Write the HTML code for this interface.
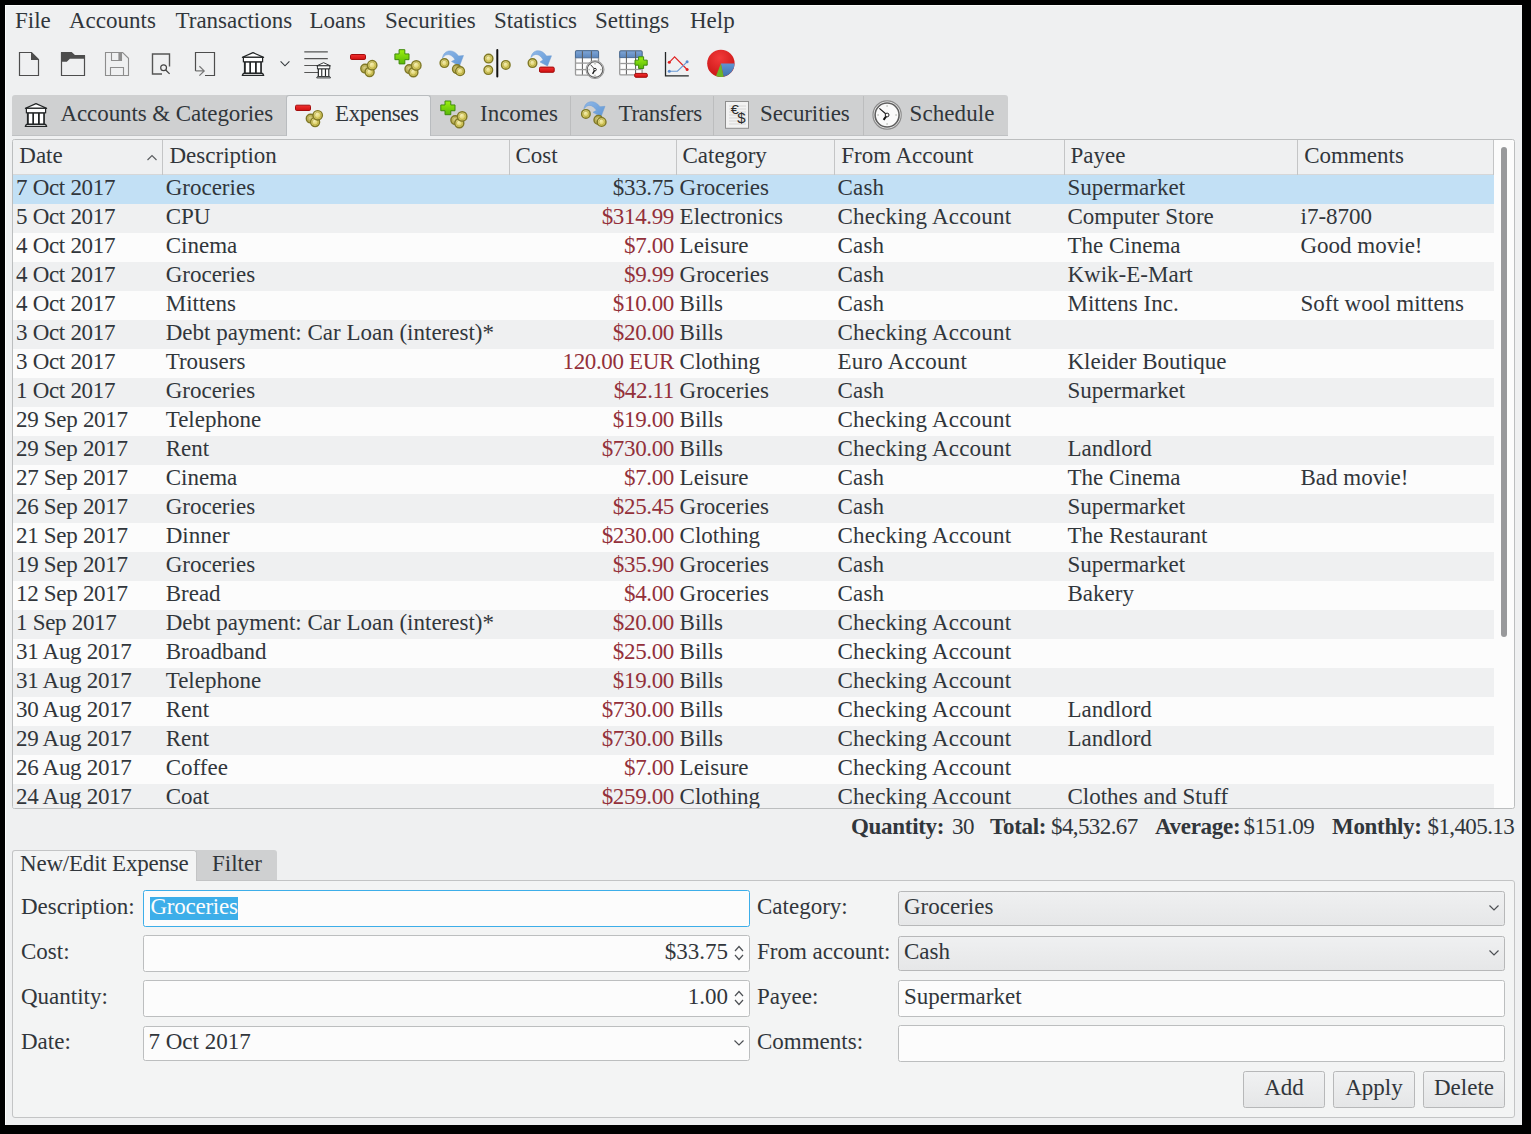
<!DOCTYPE html><html><head><meta charset="utf-8"><style>
*{margin:0;padding:0;box-sizing:border-box}
html,body{width:1531px;height:1134px;overflow:hidden;background:#000}
body{position:relative;font-family:'Liberation Serif',serif;font-size:23px;color:#31363b}
.t{position:absolute;white-space:pre;line-height:29px;height:29px}
.a{position:absolute}
svg{position:absolute;overflow:visible}
</style></head><body>
<div class="a" style="left:5px;top:5px;width:1517px;height:1120px;background:#eff0f1;border-left:1px solid #fcfcfc;border-top:1px solid #fcfcfc"></div>

<div class="t" style="left:15px;top:6px;">File</div>
<div class="t" style="left:69px;top:6px;">Accounts</div>
<div class="t" style="left:175.5px;top:6px;">Transactions</div>
<div class="t" style="left:309.5px;top:6px;">Loans</div>
<div class="t" style="left:385px;top:6px;">Securities</div>
<div class="t" style="left:494px;top:6px;">Statistics</div>
<div class="t" style="left:595px;top:6px;">Settings</div>
<div class="t" style="left:690px;top:6px;">Help</div>
<div class="a" style="left:12px;top:95px;width:996px;height:41px;background:#cfd0d1;border-bottom:1px solid #bfc1c3;border-radius:3px 3px 0 0"></div>
<div class="a" style="left:570px;top:96px;width:1px;height:40px;background:#bcbdbe"></div>
<div class="a" style="left:713px;top:96px;width:1px;height:40px;background:#bcbdbe"></div>
<div class="a" style="left:863px;top:96px;width:1px;height:40px;background:#bcbdbe"></div>
<div class="a" style="left:286px;top:95px;width:145px;height:41px;background:#eff0f1;border:1px solid #b9bcbf;border-bottom:none;border-radius:3px 3px 0 0;z-index:2"></div>
<div class="t" style="left:60.5px;top:99px;z-index:3;letter-spacing:-0.1px">Accounts &amp; Categories</div>
<div class="t" style="left:335px;top:99px;z-index:3;letter-spacing:-0.4px">Expenses</div>
<div class="t" style="left:480px;top:99px;z-index:3;letter-spacing:0px">Incomes</div>
<div class="t" style="left:618.5px;top:99px;z-index:3;letter-spacing:-0.3px">Transfers</div>
<div class="t" style="left:760px;top:99px;z-index:3;letter-spacing:-0.1px">Securities</div>
<div class="t" style="left:909.5px;top:99px;z-index:3;letter-spacing:0.1px">Schedule</div>
<div class="a" style="left:12px;top:139px;width:1503px;height:670px;background:#fcfcfc;border:1px solid #bcbebf;border-radius:2.5px;overflow:hidden;z-index:1">
<div class="a" style="left:0;top:0;width:1481px;height:35px;background:#eff0f1;border-bottom:1px solid #d6d7d8"></div>
<div class="a" style="left:149px;top:0;width:1px;height:35px;background:#c4c5c6"></div>
<div class="a" style="left:496px;top:0;width:1px;height:35px;background:#c4c5c6"></div>
<div class="a" style="left:663px;top:0;width:1px;height:35px;background:#c4c5c6"></div>
<div class="a" style="left:821px;top:0;width:1px;height:35px;background:#c4c5c6"></div>
<div class="a" style="left:1051px;top:0;width:1px;height:35px;background:#c4c5c6"></div>
<div class="a" style="left:1284px;top:0;width:1px;height:35px;background:#c4c5c6"></div>
<div class="a" style="left:1480px;top:0;width:1px;height:35px;background:#c4c5c6"></div>
<div class="t" style="left:6.300000000000001px;top:1px;">Date</div>
<div class="t" style="left:156.5px;top:1px;">Description</div>
<div class="t" style="left:502.5px;top:1px;">Cost</div>
<div class="t" style="left:669.5px;top:1px;">Category</div>
<div class="t" style="left:828.2px;top:1px;">From Account</div>
<div class="t" style="left:1057.5px;top:1px;">Payee</div>
<div class="t" style="left:1291.2px;top:1px;">Comments</div>
<svg style="left:134px;top:14px" width="11" height="7"><path d="M0.5 6 L5 1.5 L9.5 6" fill="none" stroke="#5b5e61" stroke-width="1.2"/></svg>
<div class="a" style="left:0;top:35px;width:1481px;height:29px;background:#c2e0f5"></div>
<div class="t" style="left:3px;top:33px;letter-spacing:-0.3px">7 Oct 2017</div>
<div class="t" style="left:152.7px;top:33px;">Groceries</div>
<div class="t" style="right:840px;top:33px;color:#31363b;letter-spacing:-0.35px">$33.75</div>
<div class="t" style="left:666.6px;top:33px;">Groceries</div>
<div class="t" style="left:824.5px;top:33px;letter-spacing:0.2px">Cash</div>
<div class="t" style="left:1054.5px;top:33px;">Supermarket</div>
<div class="t" style="left:1287.5px;top:33px;"></div>
<div class="a" style="left:0;top:64px;width:1481px;height:29px;background:#eff0f1"></div>
<div class="t" style="left:3px;top:62px;letter-spacing:-0.3px">5 Oct 2017</div>
<div class="t" style="left:152.7px;top:62px;">CPU</div>
<div class="t" style="right:840px;top:62px;color:#93303a;letter-spacing:-0.35px">$314.99</div>
<div class="t" style="left:666.6px;top:62px;">Electronics</div>
<div class="t" style="left:824.5px;top:62px;letter-spacing:0.2px">Checking Account</div>
<div class="t" style="left:1054.5px;top:62px;">Computer Store</div>
<div class="t" style="left:1287.5px;top:62px;">i7-8700</div>
<div class="a" style="left:0;top:93px;width:1481px;height:29px;background:#fcfcfc"></div>
<div class="t" style="left:3px;top:91px;letter-spacing:-0.3px">4 Oct 2017</div>
<div class="t" style="left:152.7px;top:91px;">Cinema</div>
<div class="t" style="right:840px;top:91px;color:#93303a;letter-spacing:-0.35px">$7.00</div>
<div class="t" style="left:666.6px;top:91px;">Leisure</div>
<div class="t" style="left:824.5px;top:91px;letter-spacing:0.2px">Cash</div>
<div class="t" style="left:1054.5px;top:91px;">The Cinema</div>
<div class="t" style="left:1287.5px;top:91px;">Good movie!</div>
<div class="a" style="left:0;top:122px;width:1481px;height:29px;background:#eff0f1"></div>
<div class="t" style="left:3px;top:120px;letter-spacing:-0.3px">4 Oct 2017</div>
<div class="t" style="left:152.7px;top:120px;">Groceries</div>
<div class="t" style="right:840px;top:120px;color:#93303a;letter-spacing:-0.35px">$9.99</div>
<div class="t" style="left:666.6px;top:120px;">Groceries</div>
<div class="t" style="left:824.5px;top:120px;letter-spacing:0.2px">Cash</div>
<div class="t" style="left:1054.5px;top:120px;">Kwik-E-Mart</div>
<div class="t" style="left:1287.5px;top:120px;"></div>
<div class="a" style="left:0;top:151px;width:1481px;height:29px;background:#fcfcfc"></div>
<div class="t" style="left:3px;top:149px;letter-spacing:-0.3px">4 Oct 2017</div>
<div class="t" style="left:152.7px;top:149px;">Mittens</div>
<div class="t" style="right:840px;top:149px;color:#93303a;letter-spacing:-0.35px">$10.00</div>
<div class="t" style="left:666.6px;top:149px;">Bills</div>
<div class="t" style="left:824.5px;top:149px;letter-spacing:0.2px">Cash</div>
<div class="t" style="left:1054.5px;top:149px;">Mittens Inc.</div>
<div class="t" style="left:1287.5px;top:149px;">Soft wool mittens</div>
<div class="a" style="left:0;top:180px;width:1481px;height:29px;background:#eff0f1"></div>
<div class="t" style="left:3px;top:178px;letter-spacing:-0.3px">3 Oct 2017</div>
<div class="t" style="left:152.7px;top:178px;">Debt payment: Car Loan (interest)*</div>
<div class="t" style="right:840px;top:178px;color:#93303a;letter-spacing:-0.35px">$20.00</div>
<div class="t" style="left:666.6px;top:178px;">Bills</div>
<div class="t" style="left:824.5px;top:178px;letter-spacing:0.2px">Checking Account</div>
<div class="t" style="left:1054.5px;top:178px;"></div>
<div class="t" style="left:1287.5px;top:178px;"></div>
<div class="a" style="left:0;top:209px;width:1481px;height:29px;background:#fcfcfc"></div>
<div class="t" style="left:3px;top:207px;letter-spacing:-0.3px">3 Oct 2017</div>
<div class="t" style="left:152.7px;top:207px;">Trousers</div>
<div class="t" style="right:840px;top:207px;color:#93303a;letter-spacing:-0.35px">120.00 EUR</div>
<div class="t" style="left:666.6px;top:207px;">Clothing</div>
<div class="t" style="left:824.5px;top:207px;letter-spacing:0.2px">Euro Account</div>
<div class="t" style="left:1054.5px;top:207px;">Kleider Boutique</div>
<div class="t" style="left:1287.5px;top:207px;"></div>
<div class="a" style="left:0;top:238px;width:1481px;height:29px;background:#eff0f1"></div>
<div class="t" style="left:3px;top:236px;letter-spacing:-0.3px">1 Oct 2017</div>
<div class="t" style="left:152.7px;top:236px;">Groceries</div>
<div class="t" style="right:840px;top:236px;color:#93303a;letter-spacing:-0.35px">$42.11</div>
<div class="t" style="left:666.6px;top:236px;">Groceries</div>
<div class="t" style="left:824.5px;top:236px;letter-spacing:0.2px">Cash</div>
<div class="t" style="left:1054.5px;top:236px;">Supermarket</div>
<div class="t" style="left:1287.5px;top:236px;"></div>
<div class="a" style="left:0;top:267px;width:1481px;height:29px;background:#fcfcfc"></div>
<div class="t" style="left:3px;top:265px;letter-spacing:-0.3px">29 Sep 2017</div>
<div class="t" style="left:152.7px;top:265px;">Telephone</div>
<div class="t" style="right:840px;top:265px;color:#93303a;letter-spacing:-0.35px">$19.00</div>
<div class="t" style="left:666.6px;top:265px;">Bills</div>
<div class="t" style="left:824.5px;top:265px;letter-spacing:0.2px">Checking Account</div>
<div class="t" style="left:1054.5px;top:265px;"></div>
<div class="t" style="left:1287.5px;top:265px;"></div>
<div class="a" style="left:0;top:296px;width:1481px;height:29px;background:#eff0f1"></div>
<div class="t" style="left:3px;top:294px;letter-spacing:-0.3px">29 Sep 2017</div>
<div class="t" style="left:152.7px;top:294px;">Rent</div>
<div class="t" style="right:840px;top:294px;color:#93303a;letter-spacing:-0.35px">$730.00</div>
<div class="t" style="left:666.6px;top:294px;">Bills</div>
<div class="t" style="left:824.5px;top:294px;letter-spacing:0.2px">Checking Account</div>
<div class="t" style="left:1054.5px;top:294px;">Landlord</div>
<div class="t" style="left:1287.5px;top:294px;"></div>
<div class="a" style="left:0;top:325px;width:1481px;height:29px;background:#fcfcfc"></div>
<div class="t" style="left:3px;top:323px;letter-spacing:-0.3px">27 Sep 2017</div>
<div class="t" style="left:152.7px;top:323px;">Cinema</div>
<div class="t" style="right:840px;top:323px;color:#93303a;letter-spacing:-0.35px">$7.00</div>
<div class="t" style="left:666.6px;top:323px;">Leisure</div>
<div class="t" style="left:824.5px;top:323px;letter-spacing:0.2px">Cash</div>
<div class="t" style="left:1054.5px;top:323px;">The Cinema</div>
<div class="t" style="left:1287.5px;top:323px;">Bad movie!</div>
<div class="a" style="left:0;top:354px;width:1481px;height:29px;background:#eff0f1"></div>
<div class="t" style="left:3px;top:352px;letter-spacing:-0.3px">26 Sep 2017</div>
<div class="t" style="left:152.7px;top:352px;">Groceries</div>
<div class="t" style="right:840px;top:352px;color:#93303a;letter-spacing:-0.35px">$25.45</div>
<div class="t" style="left:666.6px;top:352px;">Groceries</div>
<div class="t" style="left:824.5px;top:352px;letter-spacing:0.2px">Cash</div>
<div class="t" style="left:1054.5px;top:352px;">Supermarket</div>
<div class="t" style="left:1287.5px;top:352px;"></div>
<div class="a" style="left:0;top:383px;width:1481px;height:29px;background:#fcfcfc"></div>
<div class="t" style="left:3px;top:381px;letter-spacing:-0.3px">21 Sep 2017</div>
<div class="t" style="left:152.7px;top:381px;">Dinner</div>
<div class="t" style="right:840px;top:381px;color:#93303a;letter-spacing:-0.35px">$230.00</div>
<div class="t" style="left:666.6px;top:381px;">Clothing</div>
<div class="t" style="left:824.5px;top:381px;letter-spacing:0.2px">Checking Account</div>
<div class="t" style="left:1054.5px;top:381px;">The Restaurant</div>
<div class="t" style="left:1287.5px;top:381px;"></div>
<div class="a" style="left:0;top:412px;width:1481px;height:29px;background:#eff0f1"></div>
<div class="t" style="left:3px;top:410px;letter-spacing:-0.3px">19 Sep 2017</div>
<div class="t" style="left:152.7px;top:410px;">Groceries</div>
<div class="t" style="right:840px;top:410px;color:#93303a;letter-spacing:-0.35px">$35.90</div>
<div class="t" style="left:666.6px;top:410px;">Groceries</div>
<div class="t" style="left:824.5px;top:410px;letter-spacing:0.2px">Cash</div>
<div class="t" style="left:1054.5px;top:410px;">Supermarket</div>
<div class="t" style="left:1287.5px;top:410px;"></div>
<div class="a" style="left:0;top:441px;width:1481px;height:29px;background:#fcfcfc"></div>
<div class="t" style="left:3px;top:439px;letter-spacing:-0.3px">12 Sep 2017</div>
<div class="t" style="left:152.7px;top:439px;">Bread</div>
<div class="t" style="right:840px;top:439px;color:#93303a;letter-spacing:-0.35px">$4.00</div>
<div class="t" style="left:666.6px;top:439px;">Groceries</div>
<div class="t" style="left:824.5px;top:439px;letter-spacing:0.2px">Cash</div>
<div class="t" style="left:1054.5px;top:439px;">Bakery</div>
<div class="t" style="left:1287.5px;top:439px;"></div>
<div class="a" style="left:0;top:470px;width:1481px;height:29px;background:#eff0f1"></div>
<div class="t" style="left:3px;top:468px;letter-spacing:-0.3px">1 Sep 2017</div>
<div class="t" style="left:152.7px;top:468px;">Debt payment: Car Loan (interest)*</div>
<div class="t" style="right:840px;top:468px;color:#93303a;letter-spacing:-0.35px">$20.00</div>
<div class="t" style="left:666.6px;top:468px;">Bills</div>
<div class="t" style="left:824.5px;top:468px;letter-spacing:0.2px">Checking Account</div>
<div class="t" style="left:1054.5px;top:468px;"></div>
<div class="t" style="left:1287.5px;top:468px;"></div>
<div class="a" style="left:0;top:499px;width:1481px;height:29px;background:#fcfcfc"></div>
<div class="t" style="left:3px;top:497px;letter-spacing:-0.3px">31 Aug 2017</div>
<div class="t" style="left:152.7px;top:497px;">Broadband</div>
<div class="t" style="right:840px;top:497px;color:#93303a;letter-spacing:-0.35px">$25.00</div>
<div class="t" style="left:666.6px;top:497px;">Bills</div>
<div class="t" style="left:824.5px;top:497px;letter-spacing:0.2px">Checking Account</div>
<div class="t" style="left:1054.5px;top:497px;"></div>
<div class="t" style="left:1287.5px;top:497px;"></div>
<div class="a" style="left:0;top:528px;width:1481px;height:29px;background:#eff0f1"></div>
<div class="t" style="left:3px;top:526px;letter-spacing:-0.3px">31 Aug 2017</div>
<div class="t" style="left:152.7px;top:526px;">Telephone</div>
<div class="t" style="right:840px;top:526px;color:#93303a;letter-spacing:-0.35px">$19.00</div>
<div class="t" style="left:666.6px;top:526px;">Bills</div>
<div class="t" style="left:824.5px;top:526px;letter-spacing:0.2px">Checking Account</div>
<div class="t" style="left:1054.5px;top:526px;"></div>
<div class="t" style="left:1287.5px;top:526px;"></div>
<div class="a" style="left:0;top:557px;width:1481px;height:29px;background:#fcfcfc"></div>
<div class="t" style="left:3px;top:555px;letter-spacing:-0.3px">30 Aug 2017</div>
<div class="t" style="left:152.7px;top:555px;">Rent</div>
<div class="t" style="right:840px;top:555px;color:#93303a;letter-spacing:-0.35px">$730.00</div>
<div class="t" style="left:666.6px;top:555px;">Bills</div>
<div class="t" style="left:824.5px;top:555px;letter-spacing:0.2px">Checking Account</div>
<div class="t" style="left:1054.5px;top:555px;">Landlord</div>
<div class="t" style="left:1287.5px;top:555px;"></div>
<div class="a" style="left:0;top:586px;width:1481px;height:29px;background:#eff0f1"></div>
<div class="t" style="left:3px;top:584px;letter-spacing:-0.3px">29 Aug 2017</div>
<div class="t" style="left:152.7px;top:584px;">Rent</div>
<div class="t" style="right:840px;top:584px;color:#93303a;letter-spacing:-0.35px">$730.00</div>
<div class="t" style="left:666.6px;top:584px;">Bills</div>
<div class="t" style="left:824.5px;top:584px;letter-spacing:0.2px">Checking Account</div>
<div class="t" style="left:1054.5px;top:584px;">Landlord</div>
<div class="t" style="left:1287.5px;top:584px;"></div>
<div class="a" style="left:0;top:615px;width:1481px;height:29px;background:#fcfcfc"></div>
<div class="t" style="left:3px;top:613px;letter-spacing:-0.3px">26 Aug 2017</div>
<div class="t" style="left:152.7px;top:613px;">Coffee</div>
<div class="t" style="right:840px;top:613px;color:#93303a;letter-spacing:-0.35px">$7.00</div>
<div class="t" style="left:666.6px;top:613px;">Leisure</div>
<div class="t" style="left:824.5px;top:613px;letter-spacing:0.2px">Checking Account</div>
<div class="t" style="left:1054.5px;top:613px;"></div>
<div class="t" style="left:1287.5px;top:613px;"></div>
<div class="a" style="left:0;top:644px;width:1481px;height:29px;background:#eff0f1"></div>
<div class="t" style="left:3px;top:642px;letter-spacing:-0.3px">24 Aug 2017</div>
<div class="t" style="left:152.7px;top:642px;">Coat</div>
<div class="t" style="right:840px;top:642px;color:#93303a;letter-spacing:-0.35px">$259.00</div>
<div class="t" style="left:666.6px;top:642px;">Clothing</div>
<div class="t" style="left:824.5px;top:642px;letter-spacing:0.2px">Checking Account</div>
<div class="t" style="left:1054.5px;top:642px;">Clothes and Stuff</div>
<div class="t" style="left:1287.5px;top:642px;"></div>
<div class="a" style="left:1488px;top:7px;width:6px;height:490px;background:#98999b;border-radius:3px"></div>
</div>
<div class="t" style="left:851px;top:812px;font-weight:bold;letter-spacing:-0.3px">Quantity:</div>
<div class="t" style="left:952px;top:812px;letter-spacing:-0.6px">30</div>
<div class="t" style="left:990px;top:812px;font-weight:bold;letter-spacing:-0.3px">Total:</div>
<div class="t" style="left:1051px;top:812px;letter-spacing:-0.6px">$4,532.67</div>
<div class="t" style="left:1155px;top:812px;font-weight:bold;letter-spacing:-0.3px">Average:</div>
<div class="t" style="left:1243.5px;top:812px;letter-spacing:-0.6px">$151.09</div>
<div class="t" style="left:1332px;top:812px;font-weight:bold;letter-spacing:-0.3px">Monthly:</div>
<div class="t" style="left:1427.5px;top:812px;letter-spacing:-0.6px">$1,405.13</div>
<div class="a" style="left:196px;top:850px;width:81px;height:30px;background:#cfd0d1;border-radius:0 3px 0 0"></div>
<div class="a" style="left:12px;top:880px;width:1503px;height:238px;background:#f3f4f4;border:1px solid #c3c4c5;border-radius:0 3px 3px 3px"></div>
<div class="a" style="left:12px;top:850px;width:185px;height:31px;background:#f3f4f4;border:1px solid #c3c4c5;border-bottom:none;border-radius:3px 3px 0 0;z-index:2"></div>
<div class="t" style="left:20px;top:849px;z-index:3;letter-spacing:-0.2px">New/Edit Expense</div>
<div class="t" style="left:212px;top:849px;z-index:3">Filter</div>
<div class="t" style="left:21px;top:892px;">Description:</div>
<div class="t" style="left:21px;top:937px;">Cost:</div>
<div class="t" style="left:21px;top:982px;">Quantity:</div>
<div class="t" style="left:21px;top:1027px;">Date:</div>
<div class="t" style="left:757px;top:892px;">Category:</div>
<div class="t" style="left:757px;top:937px;">From account:</div>
<div class="t" style="left:757px;top:982px;">Payee:</div>
<div class="t" style="left:757px;top:1027px;">Comments:</div>
<div class="a" style="left:143px;top:890px;width:607px;height:37px;background:#fcfcfc;border:1px solid #3daee9;border-radius:2.5px;"></div>
<div class="a" style="left:150px;top:897px;width:88px;height:23px;background:#3daee9"></div>
<div class="t" style="left:150.5px;top:892px;color:#fcfcfc;letter-spacing:-0.25px">Groceries</div>
<div class="a" style="left:143px;top:935px;width:607px;height:37px;background:#fcfcfc;border:1px solid #bcbebf;border-radius:2.5px;"></div>
<div class="t" style="right:803px;top:937px;">$33.75</div>
<div class="a" style="left:143px;top:980px;width:607px;height:37px;background:#fcfcfc;border:1px solid #bcbebf;border-radius:2.5px;"></div>
<div class="t" style="right:803px;top:982px;">1.00</div>
<div class="a" style="left:143px;top:1026px;width:607px;height:35px;background:#fcfcfc;border:1px solid #bcbebf;border-radius:2.5px;"></div>
<div class="t" style="left:148.5px;top:1027px;">7 Oct 2017</div>
<svg style="left:734px;top:945px" width="10" height="16"><path d="M1 6 L5 1.5 L9 6 M1 10 L5 14.5 L9 10" fill="none" stroke="#4d5054" stroke-width="1.2"/></svg>
<svg style="left:734px;top:990px" width="10" height="16"><path d="M1 6 L5 1.5 L9 6 M1 10 L5 14.5 L9 10" fill="none" stroke="#4d5054" stroke-width="1.2"/></svg>
<svg style="left:734px;top:1040px" width="10" height="6"><path d="M0.5 0.5 L5 5 L9.5 0.5" fill="none" stroke="#4d5054" stroke-width="1.2"/></svg>
<div class="a" style="left:898px;top:891px;width:607px;height:35px;background:linear-gradient(#eff0f1,#e6e7e8);border:1px solid #b7b8b9;border-radius:2.5px;"></div>
<div class="t" style="left:904px;top:892px;">Groceries</div>
<svg style="left:1489px;top:905px" width="10" height="6"><path d="M0.5 0.5 L5 5 L9.5 0.5" fill="none" stroke="#4d5054" stroke-width="1.2"/></svg>
<div class="a" style="left:898px;top:936px;width:607px;height:35px;background:linear-gradient(#eff0f1,#e6e7e8);border:1px solid #b7b8b9;border-radius:2.5px;"></div>
<div class="t" style="left:904px;top:937px;">Cash</div>
<svg style="left:1489px;top:950px" width="10" height="6"><path d="M0.5 0.5 L5 5 L9.5 0.5" fill="none" stroke="#4d5054" stroke-width="1.2"/></svg>
<div class="a" style="left:898px;top:980px;width:607px;height:37px;background:#fcfcfc;border:1px solid #bcbebf;border-radius:2.5px;"></div>
<div class="t" style="left:904px;top:982px;">Supermarket</div>
<div class="a" style="left:898px;top:1025px;width:607px;height:37px;background:#fcfcfc;border:1px solid #bcbebf;border-radius:2.5px;"></div>
<div class="a" style="left:1243px;top:1071px;width:82px;height:37px;background:linear-gradient(#f0f1f2,#e5e6e7);border:1px solid #b7b8b9;border-radius:2.5px;"></div>
<div class="t" style="left:1243px;width:82px;text-align:center;top:1073px">Add</div>
<div class="a" style="left:1333px;top:1071px;width:82px;height:37px;background:linear-gradient(#f0f1f2,#e5e6e7);border:1px solid #b7b8b9;border-radius:2.5px;"></div>
<div class="t" style="left:1333px;width:82px;text-align:center;top:1073px">Apply</div>
<div class="a" style="left:1423px;top:1071px;width:82px;height:37px;background:linear-gradient(#f0f1f2,#e5e6e7);border:1px solid #b7b8b9;border-radius:2.5px;"></div>
<div class="t" style="left:1423px;width:82px;text-align:center;top:1073px">Delete</div>
<svg style="left:0;top:0;z-index:10" width="1531" height="140" viewBox="0 0 1531 140"><defs><radialGradient id="cd" cx="0.4" cy="0.35" r="0.7"><stop offset="0" stop-color="#d8d08a"/><stop offset="1" stop-color="#a89c3c"/></radialGradient><radialGradient id="cg" cx="0.4" cy="0.35" r="0.7"><stop offset="0" stop-color="#f4eeb8"/><stop offset="0.55" stop-color="#e2d670"/><stop offset="1" stop-color="#c8bb48"/></radialGradient><linearGradient id="rg" x1="0" y1="0" x2="0" y2="1"><stop offset="0" stop-color="#f03030"/><stop offset="1" stop-color="#d01010"/></linearGradient><linearGradient id="gg" x1="0" y1="0" x2="0" y2="1"><stop offset="0" stop-color="#9cf010"/><stop offset="1" stop-color="#58b808"/></linearGradient><linearGradient id="bg" x1="0" y1="0" x2="1" y2="1"><stop offset="0" stop-color="#8fb8e8"/><stop offset="1" stop-color="#5f96d4"/></linearGradient><radialGradient id="pr" cx="0.45" cy="0.3" r="0.75"><stop offset="0" stop-color="#f23a3a"/><stop offset="1" stop-color="#c81414"/></radialGradient><linearGradient id="pb" x1="0" y1="0" x2="0" y2="1"><stop offset="0" stop-color="#5f95d2"/><stop offset="1" stop-color="#3f72b0"/></linearGradient><linearGradient id="tg" x1="0" y1="0" x2="0" y2="1"><stop offset="0" stop-color="#7fa6d6"/><stop offset="1" stop-color="#5b86bd"/></linearGradient></defs><path d="M19.5 52.5 H31.5 L38.5 59.5 V75.5 H19.5 Z" fill="none" stroke="#4d4d4d" stroke-width="1.2"/><path d="M31 52 L39 60 H31 Z" fill="#4d4d4d"/><path d="M61.5 52.5 V75.5 H84.5 V55.5" fill="none" stroke="#4d4d4d" stroke-width="1.2"/><path d="M61 52 H71.7 L74.9 55.1 H85 V58.8 H69.9 L66.8 61.7 H61 Z" fill="#4d4d4d"/><path d="M105.5 52.5 H122.7 L128.5 58.3 V75.5 H105.5 Z" fill="none" stroke="#8d8d8d" stroke-width="1.1"/><path d="M111.5 52.5 V60.5 H121.5 V52.5" fill="none" stroke="#8d8d8d" stroke-width="1.1"/><rect x="118.4" y="52.5" width="3.2" height="8" fill="#8d8d8d"/><path d="M110.5 75.5 V67.5 H123.5 V75.5" fill="none" stroke="#8d8d8d" stroke-width="1.1"/><path d="M162 74 H152.5 V54 H169.5 V66.5" fill="none" stroke="#555" stroke-width="1.4"/><circle cx="163.6" cy="67.8" r="2.9" fill="none" stroke="#444" stroke-width="1.2"/><path d="M165.7 70 L169.6 73.9" stroke="#444" stroke-width="1.3"/><path d="M195.5 70.9 V52.5 H214.5 V75.5 H205" fill="none" stroke="#4d4d4d" stroke-width="1.2"/><path d="M195.5 70.9 H204.4 M199.4 66.2 L204.2 70.9 L199.4 75.6" fill="none" stroke="#777" stroke-width="1.2"/><path d="M253.0 52.6 L242.4 57.3 H263.6 Z" fill="#fff" stroke="#232627" stroke-width="1.2" stroke-linejoin="round"/><rect x="243.4" y="57.3" width="19.2" height="4.5" fill="#fff" stroke="#232627" stroke-width="1.2"/><rect x="243.9" y="61.8" width="18.0" height="11.4" fill="#232627"/><rect x="245.8" y="62.7" width="3.5" height="9.9" fill="#fff"/><rect x="251.0" y="62.7" width="4.0" height="9.9" fill="#fff"/><rect x="256.8" y="62.7" width="3.4" height="9.9" fill="#fff"/><path d="M243.4 73.4 H262.6 L263.7 75.4 H242.3 Z" fill="#fff" stroke="#232627" stroke-width="1.2" stroke-linejoin="round"/><path d="M280.6 61.4 L285 65.8 L289.4 61.4" fill="none" stroke="#31363b" stroke-width="1.1"/><path d="M304.3 51.9 H327.8 M304.3 58.6 H327.8 M304.3 65.5 H318 M304.3 72.5 H318" stroke="#555" stroke-width="1.1"/><path d="M323.6 62.7 L316.76 65.83 H330.44 Z" fill="#fff" stroke="#232627" stroke-width="0.9" stroke-linejoin="round"/><rect x="317.4" y="65.83" width="12.39" height="3.0" fill="#fff" stroke="#232627" stroke-width="0.9"/><rect x="317.73" y="68.83" width="11.62" height="7.6" fill="#232627"/><rect x="318.95" y="69.43" width="2.26" height="6.6" fill="#fff"/><rect x="322.31" y="69.43" width="2.58" height="6.6" fill="#fff"/><rect x="326.05" y="69.43" width="2.19" height="6.6" fill="#fff"/><path d="M317.4 76.57 H329.8 L330.51 77.9 H316.69 Z" fill="#fff" stroke="#232627" stroke-width="0.9" stroke-linejoin="round"/><rect x="350.5" y="54.5" width="15" height="5" rx="1.2" fill="url(#rg)" stroke="#a30d0d" stroke-width="1"/><circle cx="365.1" cy="68.6" r="4.3" fill="url(#cd)" stroke="#7f7826" stroke-width="1.4"/><circle cx="365.1" cy="68.6" r="2.6999999999999997" fill="none" stroke="#b3a845" stroke-width="0.7"/><circle cx="369.6" cy="72" r="4.5" fill="url(#cg)" stroke="#7f7826" stroke-width="1.4"/><circle cx="369.6" cy="72" r="2.9" fill="none" stroke="#b3a845" stroke-width="0.7"/><circle cx="372.2" cy="65.2" r="4.7" fill="url(#cg)" stroke="#7f7826" stroke-width="1.4"/><circle cx="372.2" cy="65.2" r="3.1" fill="none" stroke="#b3a845" stroke-width="0.7"/><path d="M399.08 49.7 H404.82 V53.93000000000001 H409.0 V59.67 H404.82 V63.900000000000006 H399.08 V59.67 H394.9 V53.93000000000001 H399.08 Z" fill="url(#gg)" stroke="#3f8a0c" stroke-width="1" stroke-linejoin="miter"/><circle cx="409.3" cy="69.1" r="4.3" fill="url(#cd)" stroke="#7f7826" stroke-width="1.4"/><circle cx="409.3" cy="69.1" r="2.6999999999999997" fill="none" stroke="#b3a845" stroke-width="0.7"/><circle cx="413.4" cy="72.2" r="4.5" fill="url(#cg)" stroke="#7f7826" stroke-width="1.4"/><circle cx="413.4" cy="72.2" r="2.9" fill="none" stroke="#b3a845" stroke-width="0.7"/><circle cx="416.3" cy="65.4" r="4.7" fill="url(#cg)" stroke="#7f7826" stroke-width="1.4"/><circle cx="416.3" cy="65.4" r="3.1" fill="none" stroke="#b3a845" stroke-width="0.7"/><circle cx="444.4" cy="63.1" r="4.3" fill="url(#cg)" stroke="#7f7826" stroke-width="1.4"/><circle cx="444.4" cy="63.1" r="2.6999999999999997" fill="none" stroke="#b3a845" stroke-width="0.7"/><path d="M442.5 58 C443.5 50 453 48 458.5 56 L463.5 55.5 L459.5 66 L451.5 61.5 L455 59.5 C451 53.5 446 53 442.5 58 Z" fill="url(#bg)" stroke="#6d9bd2" stroke-width="0.5" stroke-linejoin="round"/><circle cx="456.9" cy="69.1" r="4.4" fill="url(#cd)" stroke="#7f7826" stroke-width="1.4"/><circle cx="456.9" cy="69.1" r="2.8000000000000003" fill="none" stroke="#b3a845" stroke-width="0.7"/><circle cx="460.1" cy="71.2" r="4.4" fill="url(#cg)" stroke="#7f7826" stroke-width="1.4"/><circle cx="460.1" cy="71.2" r="2.8000000000000003" fill="none" stroke="#b3a845" stroke-width="0.7"/><circle cx="488.6" cy="58.6" r="4.3" fill="url(#cg)" stroke="#7f7826" stroke-width="1.4"/><circle cx="488.6" cy="58.6" r="2.6999999999999997" fill="none" stroke="#b3a845" stroke-width="0.7"/><circle cx="488.3" cy="70.1" r="4.3" fill="url(#cg)" stroke="#7f7826" stroke-width="1.4"/><circle cx="488.3" cy="70.1" r="2.6999999999999997" fill="none" stroke="#b3a845" stroke-width="0.7"/><circle cx="505.8" cy="64.9" r="4.3" fill="url(#cg)" stroke="#7f7826" stroke-width="1.4"/><circle cx="505.8" cy="64.9" r="2.6999999999999997" fill="none" stroke="#b3a845" stroke-width="0.7"/><path d="M497.3 50 V76.5" stroke="#111" stroke-width="2" stroke-linecap="round"/><circle cx="532.5" cy="63.1" r="4.3" fill="url(#cg)" stroke="#7f7826" stroke-width="1.4"/><circle cx="532.5" cy="63.1" r="2.6999999999999997" fill="none" stroke="#b3a845" stroke-width="0.7"/><path d="M531.0 57.5 C532.0 49.5 541.5 48 546.5 56 L551.5 55.8 L547.5 66 L540.0 62 L543.1 59.8 C539.5 53.5 534.5 52.8 531.0 57.5 Z" fill="url(#bg)" stroke="#6d9bd2" stroke-width="0.5" stroke-linejoin="round"/><rect x="539.5" y="67.1" width="14.700000000000045" height="5.200000000000003" rx="1.2" fill="url(#rg)" stroke="#a30d0d" stroke-width="1"/><rect x="575.5" y="50.7" width="23" height="24.5" rx="1.2" fill="#fdfdfd" stroke="#9a9a9a" stroke-width="1.3"/><path d="M575.5 57.8 V51.900000000000006 Q575.5 50.7 576.7 50.7 H597.3 Q598.5 50.7 598.5 51.900000000000006 V57.8 Z" fill="url(#tg)" stroke="#4a6d96" stroke-width="1"/><line x1="582.4" y1="51.2" x2="582.4" y2="74.7" stroke="#5a5a5a" stroke-width="1"/><line x1="591.4" y1="51.2" x2="591.4" y2="74.7" stroke="#5a5a5a" stroke-width="1"/><line x1="576" y1="63.1" x2="598" y2="63.1" stroke="#9a9a9a" stroke-width="1.3"/><line x1="576" y1="69.6" x2="598" y2="69.6" stroke="#9a9a9a" stroke-width="1.3"/><circle cx="595" cy="69.6" r="9.0" fill="#f4f4f4" stroke="#8a8a8a" stroke-width="0.85"/><circle cx="595" cy="69.6" r="7.81" fill="#fafafa" stroke="#5e5e5e" stroke-width="1.11"/><rect x="594.3" y="63.04" width="1.4" height="1.4" fill="#b4b8b0"/><rect x="600.16" y="68.9" width="1.4" height="1.4" fill="#b4b8b0"/><rect x="594.3" y="74.76" width="1.4" height="1.4" fill="#b4b8b0"/><rect x="588.44" y="68.9" width="1.4" height="1.4" fill="#b4b8b0"/><path d="M590.5 64.6 L595 69.6" stroke="#111" stroke-width="0.79"/><path d="M595 69.6 L592.6 73.8" stroke="#111" stroke-width="1.37"/><circle cx="595" cy="69.6" r="1.31" fill="#fafafa" stroke="#111" stroke-width="0.9"/><rect x="619.7" y="50.9" width="22.399999999999977" height="24.000000000000007" rx="1.2" fill="#fdfdfd" stroke="#9a9a9a" stroke-width="1.3"/><path d="M619.7 57.6 V52.1 Q619.7 50.9 620.9000000000001 50.9 H640.9 Q642.1 50.9 642.1 52.1 V57.6 Z" fill="url(#tg)" stroke="#4a6d96" stroke-width="1"/><line x1="626.4" y1="51.4" x2="626.4" y2="74.4" stroke="#5a5a5a" stroke-width="1"/><line x1="635.6" y1="51.4" x2="635.6" y2="74.4" stroke="#5a5a5a" stroke-width="1"/><line x1="620.2" y1="63.5" x2="641.6" y2="63.5" stroke="#9a9a9a" stroke-width="1.3"/><line x1="620.2" y1="69.5" x2="641.6" y2="69.5" stroke="#9a9a9a" stroke-width="1.3"/><path d="M638.59 56.8 H643.61 V60.14 H647.2 V65.16 H643.61 V68.5 H638.59 V65.16 H635.0 V60.14 H638.59 Z" fill="url(#gg)" stroke="#3f8a0c" stroke-width="1" stroke-linejoin="miter"/><rect x="634.7" y="73.4" width="12.599999999999909" height="3.8999999999999915" rx="1.2" fill="url(#rg)" stroke="#a30d0d" stroke-width="1"/><path d="M665.5 52 V75.8 H688.8" fill="none" stroke="#232627" stroke-width="1.3"/><path d="M669.3 62.3 L674.6 56.9 L687.1 69.5" fill="none" stroke="#e02020" stroke-width="1.1"/><path d="M669.3 71.2 H677.4 L687.1 61.8" fill="none" stroke="#6a9ad6" stroke-width="1.1"/><circle cx="669.3" cy="62.3" r="1.5" fill="#e02020"/><circle cx="687.1" cy="69.5" r="1.5" fill="#e02020"/><circle cx="669.3" cy="71.2" r="1.5" fill="#5a8ace"/><circle cx="687.1" cy="61.8" r="1.5" fill="#5a8ace"/><circle cx="720.9" cy="63.4" r="13.7" fill="url(#pr)"/><path d="M720.9 63.4 H734.6 A13.7 13.7 0 0 1 723.6 76.8 Z" fill="url(#pb)"/><path d="M720.9 63.4 L723.6 76.8 A13.7 13.7 0 0 1 716.0 75.89999999999999 Z" fill="#6cb52a"/><path d="M36.0 103.6 L25.4 108.3 H46.6 Z" fill="#fff" stroke="#232627" stroke-width="1.2" stroke-linejoin="round"/><rect x="26.4" y="108.3" width="19.2" height="4.5" fill="#fff" stroke="#232627" stroke-width="1.2"/><rect x="26.9" y="112.8" width="18.0" height="11.4" fill="#232627"/><rect x="28.8" y="113.7" width="3.5" height="9.9" fill="#fff"/><rect x="34.0" y="113.7" width="4.0" height="9.9" fill="#fff"/><rect x="39.8" y="113.7" width="3.4" height="9.9" fill="#fff"/><path d="M26.4 124.4 H45.6 L46.7 126.4 H25.3 Z" fill="#fff" stroke="#232627" stroke-width="1.2" stroke-linejoin="round"/><rect x="295.5" y="105.2" width="15" height="5.299999999999997" rx="1.2" fill="url(#rg)" stroke="#a30d0d" stroke-width="1"/><circle cx="310.6" cy="118.6" r="4.3" fill="url(#cd)" stroke="#7f7826" stroke-width="1.4"/><circle cx="310.6" cy="118.6" r="2.6999999999999997" fill="none" stroke="#b3a845" stroke-width="0.7"/><circle cx="315.1" cy="122.1" r="4.5" fill="url(#cg)" stroke="#7f7826" stroke-width="1.4"/><circle cx="315.1" cy="122.1" r="2.9" fill="none" stroke="#b3a845" stroke-width="0.7"/><circle cx="317.7" cy="115.3" r="4.7" fill="url(#cg)" stroke="#7f7826" stroke-width="1.4"/><circle cx="317.7" cy="115.3" r="3.1" fill="none" stroke="#b3a845" stroke-width="0.7"/><path d="M445.01 101.0 H450.78999999999996 V104.96 H455.0 V110.74 H450.78999999999996 V114.7 H445.01 V110.74 H440.8 V104.96 H445.01 Z" fill="url(#gg)" stroke="#3f8a0c" stroke-width="1" stroke-linejoin="miter"/><circle cx="455.2" cy="120.1" r="4.3" fill="url(#cd)" stroke="#7f7826" stroke-width="1.4"/><circle cx="455.2" cy="120.1" r="2.6999999999999997" fill="none" stroke="#b3a845" stroke-width="0.7"/><circle cx="459.3" cy="123.2" r="4.5" fill="url(#cg)" stroke="#7f7826" stroke-width="1.4"/><circle cx="459.3" cy="123.2" r="2.9" fill="none" stroke="#b3a845" stroke-width="0.7"/><circle cx="462.2" cy="116.4" r="4.7" fill="url(#cg)" stroke="#7f7826" stroke-width="1.4"/><circle cx="462.2" cy="116.4" r="3.1" fill="none" stroke="#b3a845" stroke-width="0.7"/><circle cx="585.9" cy="113.89999999999999" r="4.3" fill="url(#cg)" stroke="#7f7826" stroke-width="1.4"/><circle cx="585.9" cy="113.89999999999999" r="2.6999999999999997" fill="none" stroke="#b3a845" stroke-width="0.7"/><path d="M584.0 108.8 C585.0 100.8 594.5 98.8 600.0 106.8 L605.0 106.3 L601.0 116.8 L593.0 112.3 L596.5 110.3 C592.5 104.3 587.5 103.8 584.0 108.8 Z" fill="url(#bg)" stroke="#6d9bd2" stroke-width="0.5" stroke-linejoin="round"/><circle cx="598.4" cy="119.9" r="4.4" fill="url(#cd)" stroke="#7f7826" stroke-width="1.4"/><circle cx="598.4" cy="119.9" r="2.8000000000000003" fill="none" stroke="#b3a845" stroke-width="0.7"/><circle cx="601.6" cy="122.0" r="4.4" fill="url(#cg)" stroke="#7f7826" stroke-width="1.4"/><circle cx="601.6" cy="122.0" r="2.8000000000000003" fill="none" stroke="#b3a845" stroke-width="0.7"/><rect x="725.5" y="101.5" width="23" height="26.8" fill="#f2f2f2" stroke="#8e8e8e" stroke-width="1"/><path d="M729 106 H746 M729 109 H746 M729 112 H746 M729 115 H746 M729 118 H746 M729 121 H746 M729 124 H746" stroke="#e0e0e0" stroke-width="1.5"/><text x="730.8" y="113.6" font-family="Liberation Sans" font-size="13" fill="#2a2a2a" transform="translate(730.8 113.6) scale(1.12 1) translate(-730.8 -113.6)">€</text><text x="737.3" y="123.4" font-family="Liberation Sans" font-size="15" fill="#2a2a2a">$</text><circle cx="887.1" cy="115" r="14.1" fill="#f4f4f4" stroke="#8a8a8a" stroke-width="1.2"/><circle cx="887.1" cy="115" r="12.0" fill="#fafafa" stroke="#5e5e5e" stroke-width="1.6"/><rect x="886.4" y="105.3" width="1.4" height="1.4" fill="#b4b8b0"/><rect x="895.4" y="114.3" width="1.4" height="1.4" fill="#b4b8b0"/><rect x="886.4" y="123.3" width="1.4" height="1.4" fill="#b4b8b0"/><rect x="877.4" y="114.3" width="1.4" height="1.4" fill="#b4b8b0"/><path d="M879.4 108.4 L887.1 115" stroke="#111" stroke-width="1.1"/><path d="M887.1 115 L883.6 119.9" stroke="#111" stroke-width="2.0"/><circle cx="887.1" cy="115" r="1.9" fill="#fafafa" stroke="#111" stroke-width="0.9"/></svg>
</body></html>
